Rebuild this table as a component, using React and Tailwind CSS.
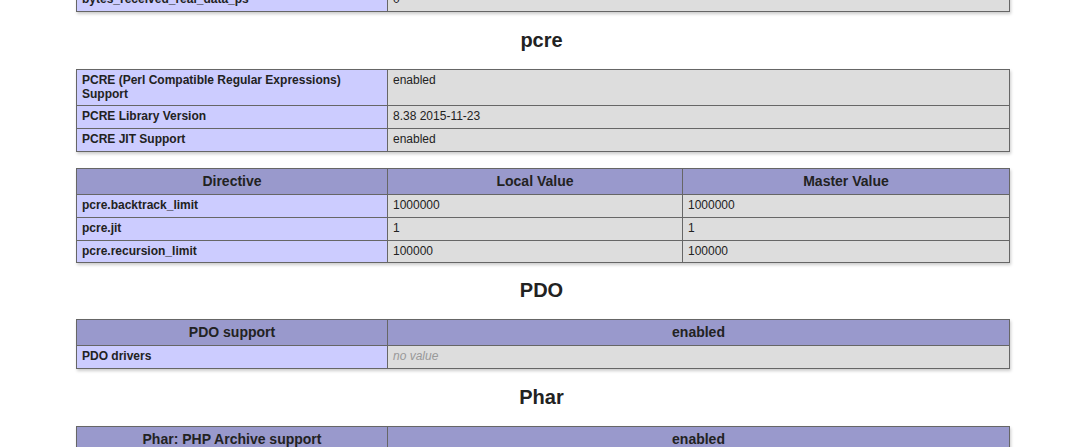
import React from 'react'

const cell = 'border border-[#666] px-[5px] py-1 text-[12px] leading-[13.8px] align-baseline box-content'
const eCls = `${cell} bg-[#ccf] font-bold w-[300px]`
const vCls = `${cell} bg-[#ddd]`
const hCls = 'border border-[#666] px-[5px] py-1 text-[14px] leading-[17px] bg-[#99c] font-bold text-center box-content'

function Table({ children, className = '' }) {
  return (
    <table className={`w-[934px] ml-[76px] my-4 border-collapse text-left shadow-[1px_2px_3px_#ccc] ${className}`}>
      <tbody>{children}</tbody>
    </table>
  )
}

function Heading({ children, className = 'my-[17px]' }) {
  return <h2 className={`text-[20px] leading-[23px] font-bold text-center ${className}`}>{children}</h2>
}

export default function App() {
  return (
    <div className="bg-white text-[#222] min-h-screen overflow-hidden" style={{ fontFamily: '"Liberation Sans", Arial, sans-serif' }}>
      <div className="pt-px -mt-px">
        <Table className="!mt-[-12px]">
          <tr>
            <td className={eCls}>bytes_received_real_data_ps</td>
            <td className={vCls}>0</td>
          </tr>
        </Table>

        <Heading>pcre</Heading>
        <Table>
          <tr>
            <td className={eCls}>PCRE (Perl Compatible Regular Expressions) Support</td>
            <td className={vCls}>enabled</td>
          </tr>
          <tr>
            <td className={eCls}>PCRE Library Version</td>
            <td className={vCls}>8.38 2015-11-23</td>
          </tr>
          <tr>
            <td className={eCls}>PCRE JIT Support</td>
            <td className={vCls}>enabled</td>
          </tr>
        </Table>
        <Table>
          <tr>
            <th className={`${hCls} w-[300px]`}>Directive</th>
            <th className={`${hCls} w-[284px]`}>Local Value</th>
            <th className={hCls}>Master Value</th>
          </tr>
          <tr>
            <td className={eCls}>pcre.backtrack_limit</td>
            <td className={vCls}>1000000</td>
            <td className={vCls}>1000000</td>
          </tr>
          <tr>
            <td className={eCls}>pcre.jit</td>
            <td className={vCls}>1</td>
            <td className={vCls}>1</td>
          </tr>
          <tr>
            <td className={eCls}>pcre.recursion_limit</td>
            <td className={vCls}>100000</td>
            <td className={vCls}>100000</td>
          </tr>
        </Table>

        <Heading className="mt-4 mb-[17px]">PDO</Heading>
        <Table>
          <tr>
            <th className={`${hCls} w-[300px]`}>PDO support</th>
            <th className={hCls}>enabled</th>
          </tr>
          <tr>
            <td className={eCls}>PDO drivers</td>
            <td className={vCls}><i className="text-[#999]">no value</i></td>
          </tr>
        </Table>

        <Heading>Phar</Heading>
        <Table>
          <tr>
            <th className={`${hCls} w-[300px]`}>Phar: PHP Archive support</th>
            <th className={hCls}>enabled</th>
          </tr>
          <tr>
            <td className={eCls}>Phar EXT version</td>
            <td className={vCls}>2.0.2</td>
          </tr>
        </Table>
      </div>
    </div>
  )
}
